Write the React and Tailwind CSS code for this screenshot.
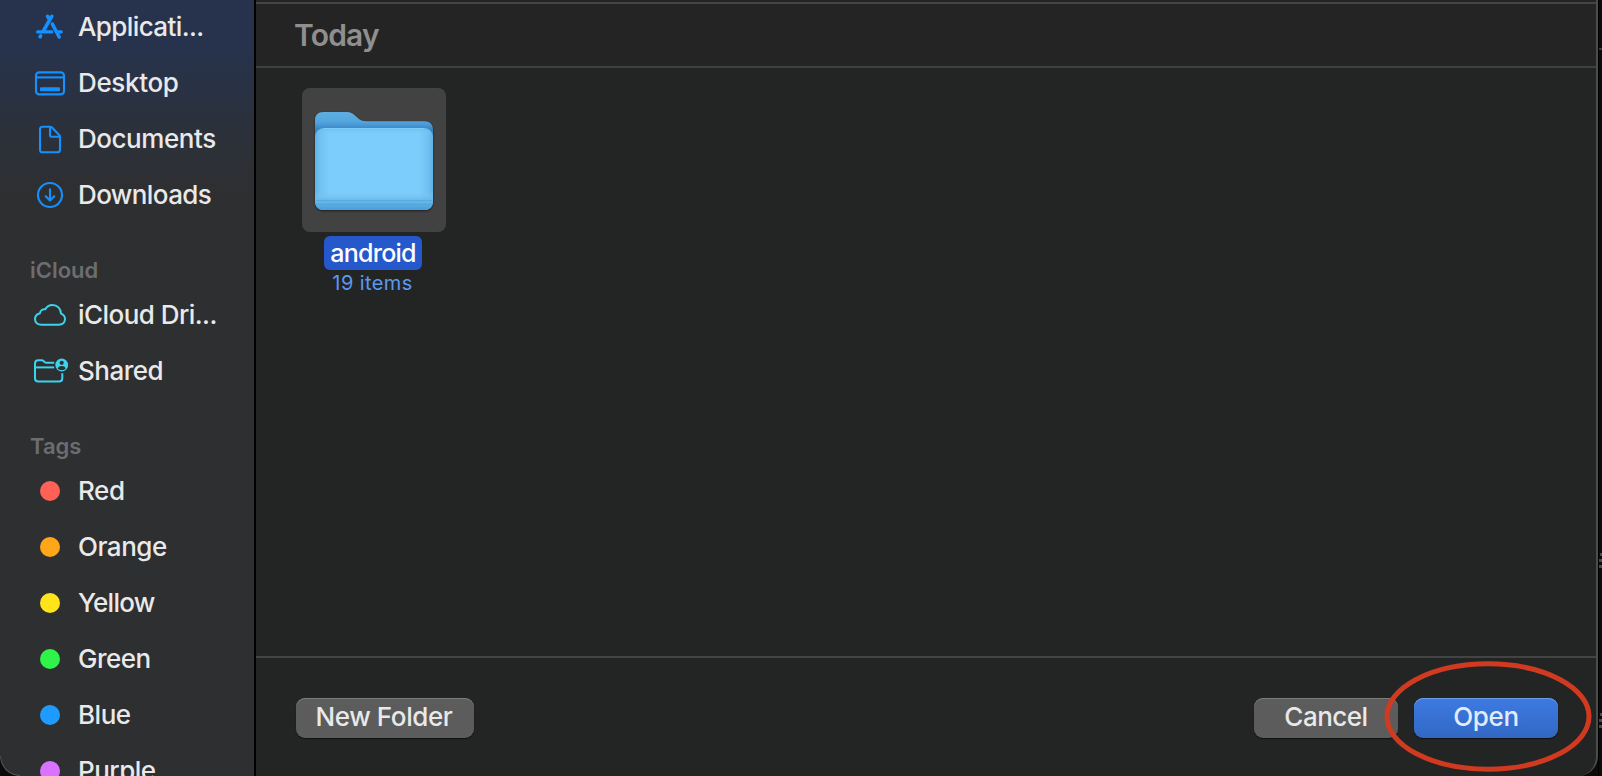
const favorites = [
  { label: "Applicati...", Icon: AppsIcon, text: "tracking-[-0.6px]" },
  { label: "Desktop", Icon: DesktopIcon, text: "tracking-[-0.35px]" },
  { label: "Documents", Icon: DocumentIcon, text: "tracking-[-0.45px]" },
  { label: "Downloads", Icon: DownloadsIcon, text: "tracking-[-0.6px]" },
]

const icloud = [
  { label: "iCloud Dri...", Icon: CloudIcon, text: "tracking-[-0.55px]" },
  { label: "Shared", Icon: SharedIcon, text: "tracking-[-0.5px]" },
]

const tags = [
  { label: "Red", color: "bg-[#ff6157]", text: "tracking-[-0.4px]" },
  { label: "Orange", color: "bg-[#ffa719]", text: "tracking-[-0.5px]" },
  { label: "Yellow", color: "bg-[#ffe41c]", text: "tracking-[-0.75px]" },
  { label: "Green", color: "bg-[#30f34a]", text: "tracking-[-0.5px]" },
  { label: "Blue", color: "bg-[#1f9bff]", text: "tracking-[-0.5px]" },
  { label: "Purple", color: "bg-[#da72ff]", text: "tracking-[-0.5px]" },
]

function AppsIcon() {
  return (
    <svg width="36" height="36" viewBox="0 0 36 36" fill="none" stroke="#1590ff" strokeLinecap="round">
      <path strokeWidth="3.6" d="M19.800 7.400 11.800 21.200M15.600 7.400l1.800 3" />
      <path strokeWidth="3.2" d="M5.600 22.900h14.200M26 22.900h3.300" />
      <path strokeWidth="3.6" d="M20.300 15 27.200 28M8.100 27.800l.5-.9" />
    </svg>
  )
}

function DesktopIcon() {
  return (
    <svg width="36" height="36" viewBox="0 0 36 36" fill="none" stroke="#1590ff" strokeWidth="2.1">
      <rect x="4" y="7.400" width="28" height="22" rx="3.2" />
      <path d="M4 12.400h28" />
      <rect x="8" y="22.200" width="20" height="4" rx="1" fill="#1590ff" stroke="none" />
    </svg>
  )
}

function DocumentIcon() {
  return (
    <svg width="36" height="36" viewBox="0 0 36 36" fill="none" stroke="#1590ff" strokeWidth="2.1" strokeLinejoin="round">
      <path d="M10.600 5.700h7.400c.8 0 1.400.2 2 .8l7.200 7.400c.6.6.8 1.200.8 2V28.700c0 1.700-.9 2.600-2.600 2.600H10.600C8.900 31.300 8 30.400 8 28.700V8.300C8 6.600 8.900 5.700 10.600 5.700Z" />
      <path d="M18 6v8.500c0 .9.400 1.300 1.300 1.300h8.400" />
    </svg>
  )
}

function DownloadsIcon() {
  return (
    <svg width="36" height="36" viewBox="0 0 36 36" fill="none" stroke="#1590ff" strokeWidth="2.1" strokeLinecap="round" strokeLinejoin="round">
      <circle cx="18" cy="18" r="12" />
      <path d="M18 12.300v11M13.700 19.200l4.300 4.400 4.300-4.400" />
    </svg>
  )
}

function CloudIcon() {
  return (
    <svg width="36" height="36" viewBox="0 0 36 36" fill="none" stroke="#3cd3ee" strokeWidth="2" strokeLinejoin="round">
      <path d="M9.500 27.700h17.200c3.700 0 6.300-2.300 6.300-5.600 0-2.600-1.500-4.600-4-5.500C28.900 11.500 25.200 8 20.400 8c-3.300 0-5.700 1.700-7.100 4.300-2.600-.6-5.100 1.100-5.300 3.900C5.500 16.900 3 19 3 22c0 3.400 2.700 5.700 6.500 5.700Z" />
    </svg>
  )
}

function SharedIcon() {
  return (
    <svg width="36" height="36" viewBox="0 0 36 36" fill="none" stroke="#3cd3ee" strokeWidth="2" strokeLinejoin="round">
      <path d="M22.200 9.700h-7.700c-.9 0-1.300-.2-2-.8l-.9-.8C11 7.500 10.500 7.300 9.600 7.300H6.400C4.200 7.300 3 8.500 3 10.700v14.500c0 2.200 1.200 3.300 3.400 3.300h20.600c2.200 0 3.300-1.100 3.300-3.300v-5" />
      <path d="M3 14.400h19.200" />
      <circle cx="29.700" cy="12" r="6.400" fill="#3cd3ee" stroke="none" />
      <circle cx="29.700" cy="9.800" r="2.100" fill="#2e2f31" stroke="none" />
      <path d="M25.700 15.500c.5-1.700 2.100-2.500 4-2.500s3.500.8 4 2.500c-1 1-2.400 1.500-4 1.500s-3-.5-4-1.500Z" fill="#2e2f31" stroke="none" />
    </svg>
  )
}

function FolderIcon() {
  return (
    <svg width="124" height="108" viewBox="0 0 124 108">
      <defs>
        <linearGradient id="back" x1="0" y1="0" x2="0" y2="1">
          <stop offset="0" stopColor="#5eaee3" />
          <stop offset="0.1" stopColor="#53a5de" />
          <stop offset="0.18" stopColor="#3a82c4" />
          <stop offset="1" stopColor="#4a9bd6" />
        </linearGradient>
        <linearGradient id="side" x1="0" y1="0" x2="1" y2="0">
          <stop offset="0" stopColor="#5fb3e8" />
          <stop offset="0.04" stopColor="#70c0f1" />
          <stop offset="0.12" stopColor="#7ccdfb" />
          <stop offset="0.88" stopColor="#7ccdfb" />
          <stop offset="0.96" stopColor="#70c0f1" />
          <stop offset="1" stopColor="#5fb3e8" />
        </linearGradient>
        <linearGradient id="shade" x1="0" y1="0" x2="0" y2="1">
          <stop offset="0" stopColor="#5fb5ea" stopOpacity="0.6" />
          <stop offset="0.08" stopColor="#7bccfa" stopOpacity="0" />
          <stop offset="0.78" stopColor="#7bccfa" stopOpacity="0" />
          <stop offset="0.86" stopColor="#6dbdee" stopOpacity="0.8" />
          <stop offset="0.92" stopColor="#5fb0e4" />
          <stop offset="1" stopColor="#469fdc" />
        </linearGradient>
        <filter id="drop" x="-10%" y="-10%" width="120%" height="125%">
          <feDropShadow dx="0" dy="1" stdDeviation="1.2" floodColor="#000" floodOpacity="0.55" />
        </filter>
      </defs>
      <g filter="url(#drop)">
        <path fill="url(#back)" d="M3 12.500C3 7 6 4 11.500 4H34c4.500 0 6.500 1.200 9.500 4l2.800 2.600c2.300 2.100 4.700 2.700 8.200 2.700H112c5.800 0 9 3 9 8.700v71c0 6-3 9-9 9H12c-6 0-9-3-9-9Z" />
        <rect x="3" y="20" width="118" height="82" rx="9" fill="url(#side)" />
        <rect x="3" y="20" width="118" height="82" rx="9" fill="url(#shade)" />
      </g>
      <path stroke="#8bd3f8" strokeOpacity="0.6" strokeWidth="1" d="M12 20.500h100" />
      <path stroke="#4f9fd4" strokeOpacity="0.6" strokeWidth="1" d="M4 92.500h116M4 96.500h116" />
    </svg>
  )
}

function SidebarItem({ label, text, children }) {
  return (
    <div className="flex h-14 shrink-0 items-center">
      <div className="ml-8 flex w-9 justify-center">{children}</div>
      <span className={`ml-[10px] whitespace-nowrap text-[26px] leading-8 font-[450] text-[#e9e9e9] ${text}`}>{label}</span>
    </div>
  )
}

function SidebarHeading({ children }) {
  return (
    <div className="flex h-16 shrink-0 items-center pl-[30px] pt-[30px] pb-px text-[22px] leading-7 font-semibold text-[#6c6d6f]">
      {children}
    </div>
  )
}

function Sidebar() {
  return (
    <aside className="relative h-full w-[256px] shrink-0 overflow-hidden rounded-bl-[20px] border-r-2 border-black bg-[#2e2f31] bg-linear-to-b from-[#27334c] from-[50px] via-[#2b313c] via-[125px] to-[#2e2f31] to-[190px]">
      <div className="-mt-px flex flex-col">
        {favorites.map(({ label, text, Icon }) => (
          <SidebarItem key={label} label={label} text={text}>
            <Icon />
          </SidebarItem>
        ))}
        <SidebarHeading>iCloud</SidebarHeading>
        {icloud.map(({ label, text, Icon }) => (
          <SidebarItem key={label} label={label} text={text}>
            <Icon />
          </SidebarItem>
        ))}
        <SidebarHeading>Tags</SidebarHeading>
        {tags.map(({ label, color, text }) => (
          <SidebarItem key={label} label={label} text={text}>
            <span className={`size-5 rounded-full ${color}`} />
          </SidebarItem>
        ))}
      </div>
      <div className="absolute bottom-0 left-0 size-5 rounded-bl-[20px] border-b border-l border-[#565758]" />
    </aside>
  )
}

function DialogButton({ className, children }) {
  return (
    <button className={`flex h-10 items-center justify-center rounded-[9px] pb-[2px] text-[26px] leading-8 font-[450] ${className}`}>
      {children}
    </button>
  )
}

// slivers of the window behind the dialog
function Grip() {
  return (
    <div className="flex flex-col items-end gap-[3px]">
      <span className="h-[3px] w-[2px] bg-[#4a4a4a]" />
      <span className="h-[3px] w-[3px] bg-[#4a4a4a]" />
      <span className="h-[3px] w-[3px] bg-[#4a4a4a]" />
    </div>
  )
}

export default function App() {
  return (
    <div className="flex h-[776px] w-[1602px] overflow-hidden bg-[#0b0b0b] font-['Inter',sans-serif]">
      <div className="flex w-[1598px] shrink-0 overflow-hidden rounded-b-[20px] border-r-2 border-[#4b4c4c] bg-[#232524]">
        <Sidebar />
        <main className="flex min-w-0 flex-1 flex-col pt-[2px]">
          <div className="flex h-[66px] shrink-0 items-center border-y-2 border-t-[#434544] border-b-[#403e3f] bg-[#242424] pl-[38px] text-[30px] font-semibold tracking-[-0.8px] text-[#8f8f8f]">
            Today
          </div>
          <div className="flex-1 pl-[46px] pt-5">
            <div className="flex w-36 flex-col items-center">
              <div className="flex size-36 items-center justify-center rounded-lg bg-[#414241] pt-[3px]">
                <FolderIcon />
              </div>
              <div className="mt-1 mr-[2px] flex h-[34px] w-[98px] items-center justify-center rounded-md bg-[#2559cb] text-[25px] leading-8 font-medium tracking-[-0.75px] text-white">
                android
              </div>
              <div className="mr-[3px] mt-px text-[20px] leading-6 tracking-[0.4px] text-[#5a99f2]">19 items</div>
            </div>
          </div>
          <footer className="flex h-[120px] shrink-0 items-start border-t-2 border-[#434544] pl-10 pr-[38px] pt-10">
            <DialogButton className="w-[178px] bg-[#5b5c5b] pr-[2px] tracking-[-0.4px] text-[#e9e9e9] shadow-[inset_0_1px_0_#7c7d7c,0_1px_1px_#111]">
              New Folder
            </DialogButton>
            <DialogButton className="ml-auto w-36 bg-[#5b5c5b] tracking-[-0.5px] text-[#e9e9e9] shadow-[inset_0_1px_0_#7c7d7c,0_1px_1px_#111]">
              Cancel
            </DialogButton>
            <div className="relative ml-4">
              <DialogButton className="w-36 bg-linear-to-b from-[#3d7ae2] to-[#3268c4] tracking-[-0.3px] text-[#e2ebfa] shadow-[inset_0_1px_0_#6b9cec,0_1px_1px_#111]">
                Open
              </DialogButton>
              <svg className="absolute -left-[32px] -top-[38px]" width="212" height="114" viewBox="0 0 212 114" fill="none">
                <ellipse cx="106" cy="56.500" rx="101" ry="52.700" stroke="#d03a20" strokeWidth="5" />
              </svg>
            </div>
          </footer>
        </main>
      </div>
      <div className="flex w-1 shrink-0 flex-col border-l border-black pt-12">
        <div className="h-[2px] bg-[#3a3a3a]" />
        <div className="mt-[503px]">
          <Grip />
        </div>
        <div className="mt-[145px]">
          <Grip />
        </div>
      </div>
    </div>
  )
}
